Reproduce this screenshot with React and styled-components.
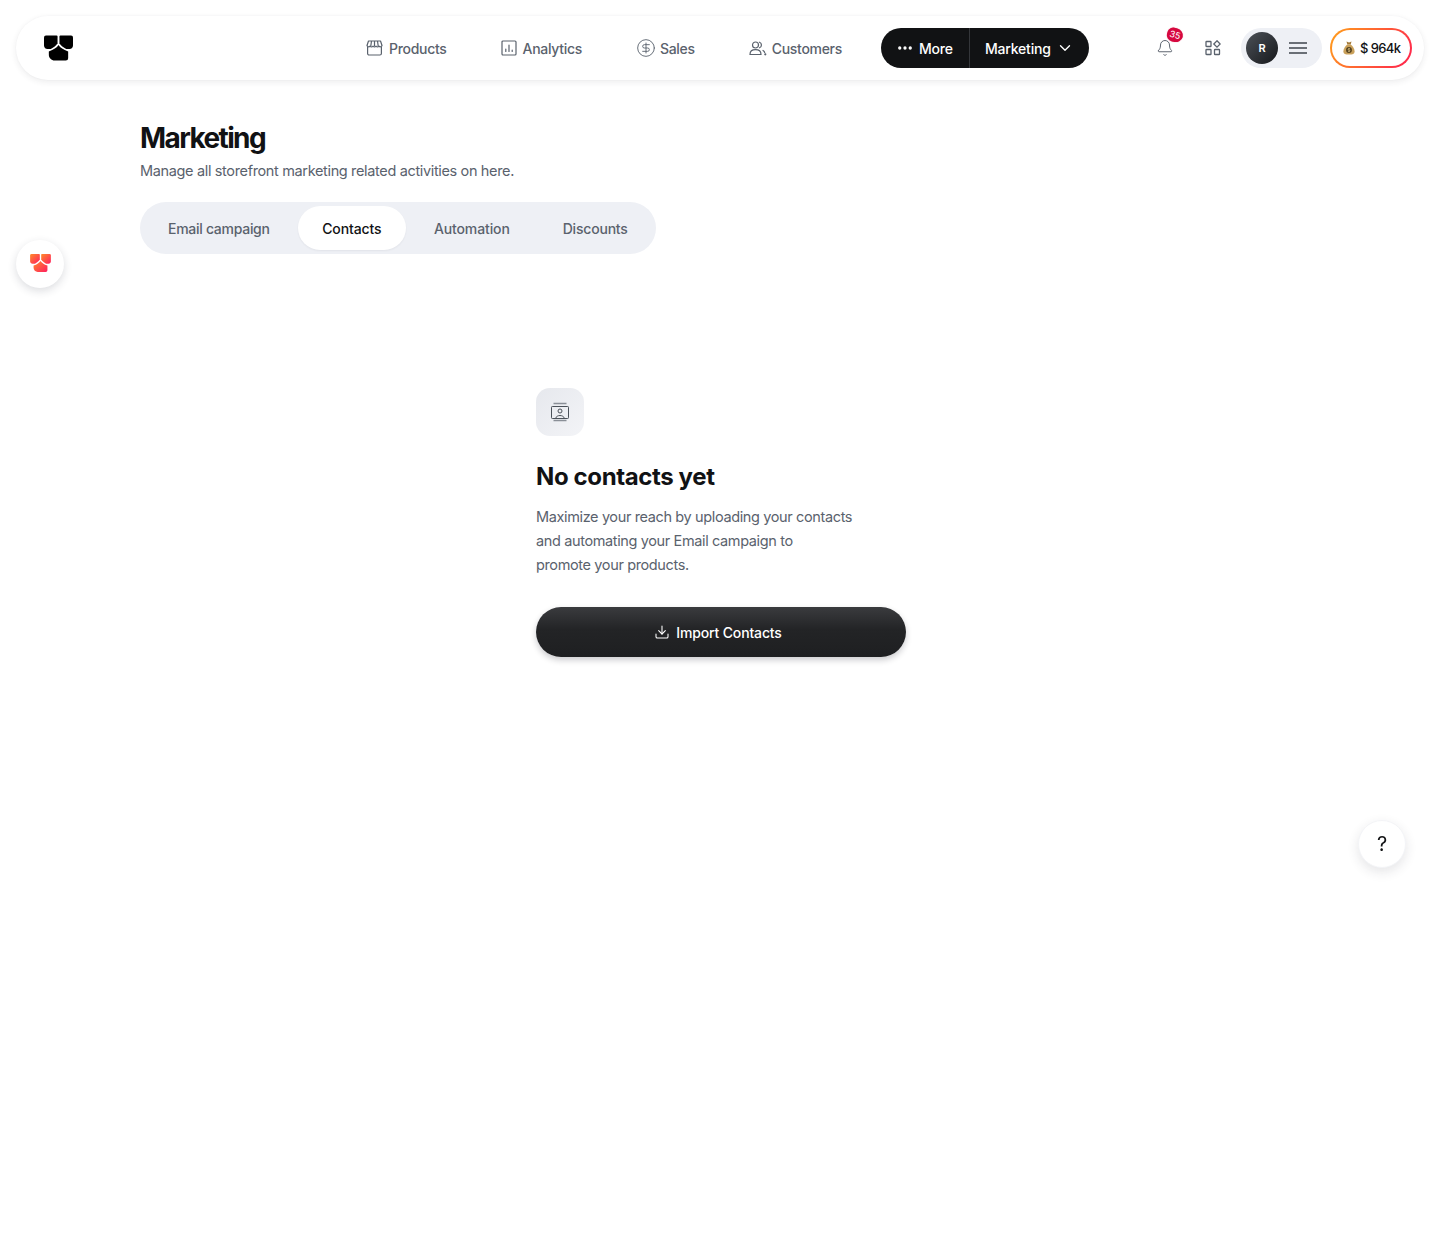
import React from 'react'
import styled, { createGlobalStyle } from 'styled-components'
import { Bell, ChevronDown, CircleDollarSign, Download, Ellipsis } from 'lucide-react'

const GlobalStyle = createGlobalStyle`
  html, body {
    margin: 0;
    background: #fff;
    font-family: Inter, "Noto Sans", sans-serif;
    color: #111214;
  }
  * { box-sizing: border-box; }
`

const LogoMark = ({ width, height, fill, children }) => (
  <svg width={width} height={height} viewBox="0 0 30 26" fill={fill}>
    {children}
    <path d="M2 0H13a1 1 0 0 1 1 1v7c-1.500 2.500-4 4.500-7 6H3.500C1.500 14 0 12.500 0 10.500V2a2 2 0 0 1 2-2Z" />
    <path d="M28 0H17a1 1 0 0 0-1 1v7c1.500 2.500 4 4.500 7 6h3.500c2 0 3.500-1.500 3.500-3.500V2a2 2 0 0 0-2-2Z" />
    <path d="M15 10c1.700 2.800 5 5 10 6.500v7a2.500 2.500 0 0 1-2.500 2.500H11c-3.300 0-6-2.700-6-6v-3.500c5-1.500 8.300-3.700 10-6.500Z" />
  </svg>
)

const StoreIcon = () => (
  <svg width="17" height="16" viewBox="0 0 17 16" fill="none" stroke="currentColor" strokeWidth="1.200" strokeLinejoin="round">
    <path d="M2.500 1h12l1.500 4.500a1.700 1.700 0 0 1-3 .6 1.900 1.900 0 0 1-3 0 1.900 1.900 0 0 1-3 0 1.900 1.900 0 0 1-3 0 1.700 1.700 0 0 1-3-.6L2.500 1Z" />
    <path d="M1.600 7v6.500a1.500 1.500 0 0 0 1.500 1.500h10.800a1.500 1.500 0 0 0 1.500-1.500V7M5.500 1 4.800 6M8.500 1v5M11.500 1l.7 5" />
  </svg>
)

const AnalyticsIcon = () => (
  <svg width="16" height="16" viewBox="0 0 16 16" fill="none" stroke="currentColor" strokeWidth="1.200">
    <rect x="1" y="1" width="14" height="14" rx="1" />
    <path d="M4.800 11.500V9M8 11.500V5M11.200 11.500V10" strokeLinecap="round" />
  </svg>
)

const CustomersIcon = () => (
  <svg width="18" height="15" viewBox="0 0 18 15" fill="none" stroke="currentColor" strokeWidth="1.200" strokeLinecap="round">
    <circle cx="6.500" cy="4" r="3" />
    <path d="M1 13.500c0-3 2.400-4.800 5.500-4.800s5.500 1.800 5.500 4.800H1Z" />
    <path d="M10.500 1.200a3 3 0 0 1 0 5.600M14 9.500c1 .6 1.500 1.300 1.700 2" />
    <circle cx="16.300" cy="13.300" r=".5" fill="currentColor" />
  </svg>
)

const AppsIcon = () => (
  <svg width="16" height="16" viewBox="0 0 16 16" fill="none" stroke="currentColor" strokeWidth="1.300">
    <rect x="1" y="1.500" width="5" height="5" rx=".6" />
    <rect x="1" y="9.500" width="5" height="5" rx=".6" />
    <rect x="9.500" y="9.500" width="5" height="5" rx=".6" />
    <path d="M12 .8 15.200 4 12 7.200 8.800 4 12 .8Z" />
  </svg>
)

const ContactIcon = () => (
  <svg width="20" height="20" viewBox="0 0 20 20" fill="none" stroke="#4b5159" strokeWidth="1">
    <path d="M3.500 1.500h13M3.500 18.500h13" strokeWidth="1.300" stroke="#8a8f97" />
    <rect x="1.500" y="4.500" width="17" height="12" rx=".8" />
    <circle cx="10" cy="9" r="2" />
    <path d="M5.500 16.500c.6-2 2.400-3 4.500-3s3.900 1 4.500 3" />
  </svg>
)

const MoneyBag = () => (
  <svg width="12" height="14" viewBox="0 0 12 14">
    <path d="M3.500.6 6 1.600 8.500.6 7.700 3.400H4.300L3.500.6Z" fill="#a57b3a" />
    <path d="M4.200 3.600h3.600C10 5.400 11.600 8 11.600 10.400c0 2.200-1.700 3.200-5.600 3.200S.4 12.600.4 10.400C.4 8 2 5.400 4.200 3.600Z" fill="#c9a05a" />
    <circle cx="6" cy="9" r="2.900" fill="#4c3b1c" />
    <path d="M7.200 7.900C6.600 7.300 4.900 7.400 5 8.400c.1 1 2.100.4 2.100 1.300 0 1-1.700 1-2.300.4M6 6.800v4.400" stroke="#e8cc8c" strokeWidth=".6" fill="none" />
  </svg>
)

const navItems = [
  { label: 'Products', icon: <StoreIcon /> },
  { label: 'Analytics', icon: <AnalyticsIcon /> },
  { label: 'Sales', icon: <CircleDollarSign size={20} strokeWidth={1.1} />, gap: 4 },
  { label: 'Customers', icon: <CustomersIcon />, gap: 5 },
]

const tabs = ['Email campaign', 'Contacts', 'Automation', 'Discounts']

function App() {
  return (
    <>
      <GlobalStyle />
      <Page>
        <Header>
          <Logo>
            <LogoMark width={29} height={26} fill="#000" />
          </Logo>
          <Nav>
            {navItems.map((item) => (
              <NavItem key={item.label} $gap={item.gap}>
                {item.icon}
                {item.label}
              </NavItem>
            ))}
          </Nav>
          <DarkPill>
            <MoreButton>
              <Ellipsis size={18} strokeWidth={2.4} />
              More
            </MoreButton>
            <CurrentButton>
              Marketing
              <ChevronDown size={18} strokeWidth={1.8} />
            </CurrentButton>
          </DarkPill>
          <BellButton>
            <Bell size={18} strokeWidth={1.3} />
            <Badge>35</Badge>
          </BellButton>
          <AppsButton>
            <AppsIcon />
          </AppsButton>
          <UserPill>
            <Avatar>R</Avatar>
            <MenuLines>
              <span />
              <span />
              <span />
            </MenuLines>
          </UserPill>
          <Balance>
            <MoneyBag />
            $ 964k
          </Balance>
        </Header>

        <Main>
          <Title>Marketing</Title>
          <Subtitle>Manage all storefront marketing related activities on here.</Subtitle>
          <Tabs>
            {tabs.map((tab) => (
              <Tab key={tab} $active={tab === 'Contacts'}>{tab}</Tab>
            ))}
          </Tabs>

          <Empty>
            <EmptyIcon>
              <ContactIcon />
            </EmptyIcon>
            <EmptyTitle>No contacts yet</EmptyTitle>
            <EmptyText>
              Maximize your reach by uploading your contacts
              <br />
              and automating your Email campaign to
              <br />
              promote your products.
            </EmptyText>
            <ImportButton>
              <Download size={16} strokeWidth={1.6} />
              Import Contacts
            </ImportButton>
          </Empty>
        </Main>
      </Page>

      <SideButton>
        <LogoMark width={21} height={18} fill="url(#sideLogo)">
          <defs>
            <linearGradient id="sideLogo" x1="0" y1="0" x2="1" y2="1">
              <stop offset="0" stopColor="#ff8a2a" />
              <stop offset="1" stopColor="#ff1f5f" />
            </linearGradient>
          </defs>
        </LogoMark>
      </SideButton>
      <HelpButton>?</HelpButton>
    </>
  )
}

export default App

const Page = styled.div`
  min-height: 1244px;
  padding: 16px 16px 0;
`

const Header = styled.header`
  display: flex;
  align-items: center;
  height: 64px;
  padding: 0 12px 0 28px;
  border-radius: 40px;
  background: #fff;
  box-shadow: 0 2px 6px rgba(40, 44, 60, 0.09), 0 0 2px rgba(40, 44, 60, 0.03);

  > * {
    flex-shrink: 0;
  }
`

const Logo = styled.div`
  display: flex;
  width: 30px;
  height: 26px;
`

const Nav = styled.nav`
  display: flex;
  align-items: center;
  gap: 54px;
  margin-left: 292px;
`

const NavItem = styled.a`
  display: flex;
  align-items: center;
  gap: ${(props) => props.$gap || 6}px;
  color: #5a626d;
  font-size: 14px;
  font-weight: 500;
  letter-spacing: -0.3px;
`

const DarkPill = styled.div`
  display: flex;
  align-items: center;
  width: 208px;
  height: 40px;
  margin-left: 39px;
  border-radius: 20px;
  background: #111214;
  color: #fff;
  font-size: 14px;
  font-weight: 500;
  letter-spacing: -0.2px;
`

const MoreButton = styled.div`
  display: flex;
  align-items: center;
  gap: 5px;
  width: 89px;
  height: 100%;
  padding-left: 15px;
  border-right: 1px solid #34363a;
`

const CurrentButton = styled.div`
  display: flex;
  align-items: center;
  justify-content: space-between;
  flex: 1;
  padding: 0 15px 0 15px;
`

const BellButton = styled.div`
  position: relative;
  display: flex;
  margin-left: 67px;
  color: #5a626d;
`

const Badge = styled.span`
  position: absolute;
  top: -11px;
  left: 11px;
  width: 16px;
  height: 14px;
  border-radius: 50% 60% 60% 50%;
  background: #d6083f;
  box-shadow: 0 0 1px rgba(214, 8, 63, 0.5);
  color: #fff;
  font-size: 9px;
  line-height: 14px;
  text-align: center;
  transform: rotate(15deg);
`

const AppsButton = styled.div`
  display: flex;
  margin-left: 31px;
  color: #5a626d;
`

const UserPill = styled.div`
  display: flex;
  align-items: center;
  gap: 11px;
  width: 81px;
  height: 40px;
  margin-left: 20px;
  padding-left: 5px;
  border-radius: 20px;
  background: #eef0f5;
`

const Avatar = styled.div`
  display: flex;
  align-items: center;
  justify-content: center;
  width: 32px;
  height: 32px;
  border-radius: 50%;
  background: linear-gradient(135deg, #4c5158, #16181b);
  color: #fff;
  font-size: 11px;
  font-weight: 600;
`

const MenuLines = styled.div`
  display: flex;
  flex-direction: column;
  gap: 3.500px;
  width: 18px;

  span {
    height: 1.500px;
    background: #6a6f76;
  }
`

const Balance = styled.div`
  display: flex;
  align-items: center;
  gap: 5px;
  width: 82px;
  height: 40px;
  margin-left: 8px;
  padding-left: 11px;
  border: 2px solid transparent;
  border-radius: 20px;
  background:
    linear-gradient(#fff, #fff) padding-box,
    linear-gradient(120deg, #ffa11a, #ff1f4f) border-box;
  font-size: 13px;
  font-weight: 500;
  letter-spacing: -0.6px;
`

const Main = styled.main`
  padding: 40px 0 0 124px;
`

const Title = styled.h1`
  margin: 0;
  font-size: 28px;
  line-height: 36px;
  font-weight: 700;
  letter-spacing: -1.600px;
  color: #111214;
`

const Subtitle = styled.p`
  margin: 3px 0 0;
  font-size: 14.500px;
  line-height: 24px;
  letter-spacing: -0.350px;
  color: #5a626d;
`

const Tabs = styled.div`
  display: inline-flex;
  align-items: center;
  height: 52px;
  margin-top: 19px;
  padding: 0 28px;
  border-radius: 26px;
  background: #eef0f5;
`

const Tab = styled.div`
  display: flex;
  align-items: center;
  height: 44px;
  padding: 0 24.500px;
  border-radius: 22px;
  font-size: 14px;
  font-weight: 500;
  letter-spacing: -0.120px;
  color: ${(props) => (props.$active ? '#111214' : '#5a626d')};
  background: ${(props) => (props.$active ? '#fff' : 'transparent')};
  box-shadow: ${(props) => (props.$active ? '0 1px 2px rgba(30, 34, 50, 0.06)' : 'none')};

  &:first-child {
    padding-left: 0;
    padding-right: 28px;
    letter-spacing: -0.280px;
  }
  &:nth-child(3) {
    padding: 0 28px;
  }
  &:last-child {
    padding: 0 0 0 25px;
    letter-spacing: -0.200px;
  }
`

const Empty = styled.section`
  display: flex;
  flex-direction: column;
  align-items: flex-start;
  width: 370px;
  margin: 134px 0 0 396px;
`

const EmptyIcon = styled.div`
  display: flex;
  align-items: center;
  justify-content: center;
  width: 48px;
  height: 48px;
  border-radius: 14px;
  background: linear-gradient(135deg, #e6e8ed, #f3f4f7);
`

const EmptyTitle = styled.h2`
  margin: 24px 0 0;
  font-size: 24px;
  line-height: 34px;
  font-weight: 700;
  letter-spacing: -0.380px;
`

const EmptyText = styled.p`
  margin: 11px 0 0;
  font-size: 14.500px;
  line-height: 24px;
  letter-spacing: -0.370px;
  color: #5a626d;
`

const ImportButton = styled.button`
  display: flex;
  align-items: center;
  justify-content: center;
  gap: 6px;
  width: 370px;
  height: 50px;
  margin-top: 30px;
  padding: 0 6px 0 0;
  border: 0;
  border-radius: 25px;
  background: linear-gradient(180deg, #3a3b3e 0%, #232426 45%, #1e1f21 100%);
  box-shadow: 0 3px 6px rgba(20, 20, 30, 0.22);
  color: #fff;
  font-family: inherit;
  font-size: 14px;
  font-weight: 500;
  letter-spacing: -0.150px;
`

const SideButton = styled.div`
  position: fixed;
  top: 240px;
  left: 16px;
  display: flex;
  align-items: center;
  justify-content: center;
  width: 48px;
  height: 48px;
  border-radius: 50%;
  background: #fff;
  box-shadow: 0 3px 8px rgba(40, 44, 60, 0.16);
  padding-bottom: 3px;
`

const HelpButton = styled.div`
  position: fixed;
  top: 820px;
  left: 1358px;
  display: flex;
  align-items: center;
  justify-content: center;
  width: 48px;
  height: 48px;
  border-radius: 50%;
  background: #fff;
  border: 1px solid #f3f4f7;
  box-shadow: 0 4px 12px rgba(40, 44, 60, 0.12);
  font-size: 20px;
`
